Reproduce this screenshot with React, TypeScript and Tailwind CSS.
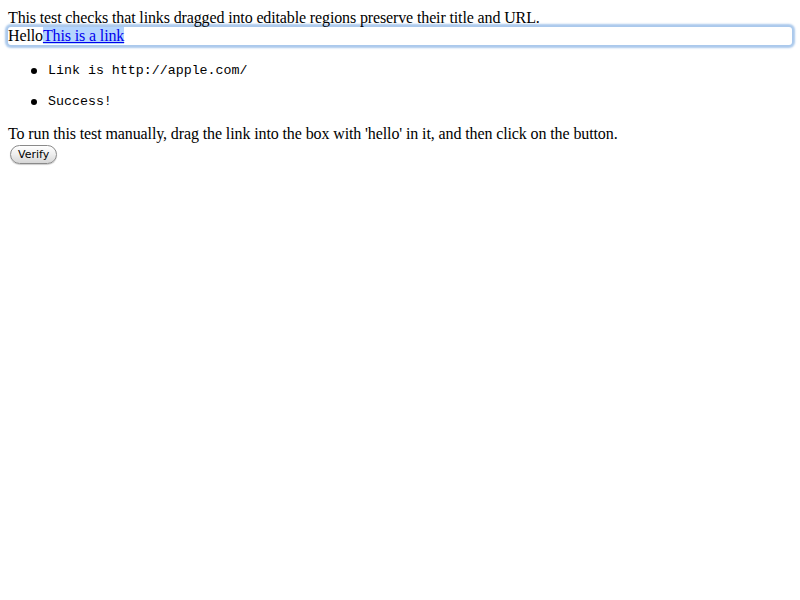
import React from "react";

const App = () => {
	return (
		<div className="min-h-[600px] bg-white px-2 pt-[9px] pb-2 font-['Liberation_Serif',serif] text-[16px] leading-[18px] tracking-[-0.13px] text-black">
			<div>This test checks that links dragged into editable regions preserve their title and URL.</div>
			<div className="rounded-[3px] shadow-[0_0_2px_3px_#abc9ec]">
				Hello
				<a href="#" className="bg-[#b4d5fe] text-[#0000ee] underline">
					This is a link
				</a>
			</div>
			<ul className="mt-[18px] mb-[15px] flex flex-col gap-[15px] font-['Liberation_Mono',monospace] text-[13.3px] leading-[16px] tracking-normal">
				<li className="flex items-center">
					<span className="ml-[23px] mr-[11px] h-[6px] w-[6px] rounded-full bg-black" />
					Link is http://apple.com/
				</li>
				<li className="flex items-center">
					<span className="ml-[23px] mr-[11px] h-[6px] w-[6px] rounded-full bg-black" />
					Success!
				</li>
			</ul>
			<div className="tracking-[-0.11px]">
				To run this test manually, drag the link into the box with 'hello' in it, and then click on the button.
			</div>
			<button className="mt-[2px] ml-[2px] h-[19px] rounded-full border border-[#8a8a8a] bg-gradient-to-b from-[#ffffff] via-[#eeeeee] to-[#d6d6d6] px-[7px] font-['DejaVu_Sans',sans-serif] text-[11px] leading-[17px] tracking-normal text-black shadow-[0_1px_1px_rgba(0,0,0,0.2)]">
				Verify
			</button>
		</div>
	);
};

export default App;
